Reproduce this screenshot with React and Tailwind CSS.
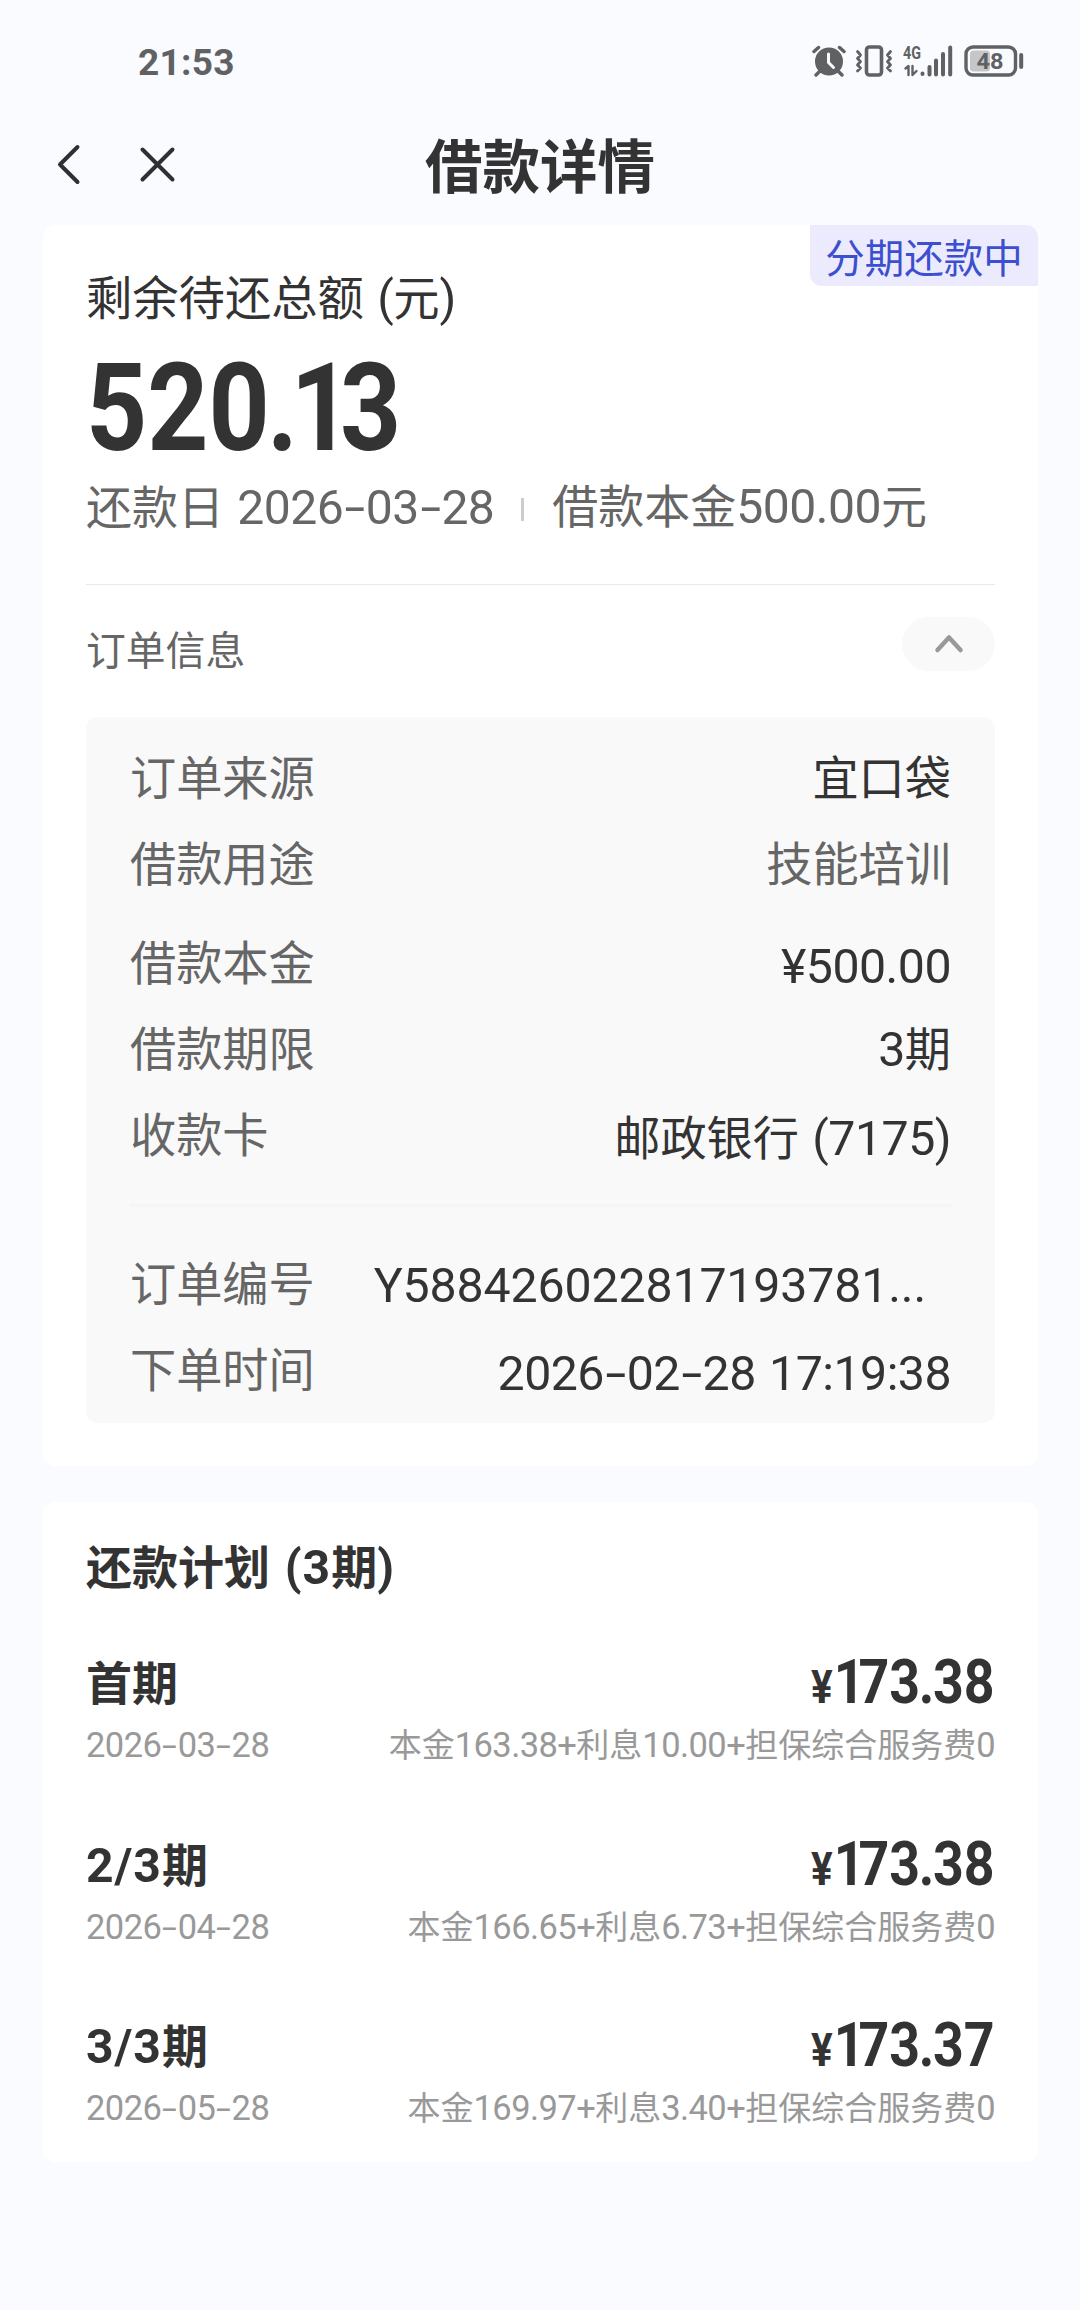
import React, { useState } from 'react';

const orderRows = [
  { label: '订单来源', value: '宜口袋' },
  { label: '借款用途', value: '技能培训', muted: true },
  { label: '借款本金', value: '¥500.00', gap: true, low: true },
  { label: '借款期限', value: '3期' },
  { label: '收款卡', value: '邮政银行 (7175)', low: true },
];

const orderMeta = [
  { label: '订单编号', value: 'Y588426022817193781...', indent: true },
  { label: '下单时间', value: '2026-02-28 17:19:38', low: true },
];

const plans = [
  { name: '首期', date: '2026-03-28', amount: '173.38', detail: '本金163.38+利息10.00+担保综合服务费0' },
  { name: '2/3期', date: '2026-04-28', amount: '173.38', detail: '本金166.65+利息6.73+担保综合服务费0' },
  { name: '3/3期', date: '2026-05-28', amount: '173.37', detail: '本金169.97+利息3.40+担保综合服务费0' },
];

// Latin runs get Roboto, slightly larger than the Chinese around them
function Mixed({ children, tracking = 'tracking-[-0.011em]' }) {
  return children.split(/([\x20-\x7e¥]+)/).filter(Boolean).map((part, i) => {
    if (!/^[\x20-\x7e¥]/.test(part)) return <React.Fragment key={i}>{part}</React.Fragment>;
    return (
      <span key={i} className={`font-[Roboto] text-[1.045em] leading-none [word-spacing:0.04em] whitespace-pre ${tracking}`}>
        {part.split(/(-)/).map((s, j) =>
          s === '-' ? (
            <span key={j} className="inline-block w-[0.47em] scale-x-[1.55] text-center">-</span>
          ) : s
        )}
      </span>
    );
  });
}

// Condensed money figures, with the dot and the "1" kerned tight
function Amount({ children }) {
  return children.split('').map((c, i, all) => {
    let kern = '';
    if (c === '1') kern = 'tracking-[-0.11em]';
    else if (c === '.' && all[i + 1] === '1') kern = 'tracking-[-0.07em]';
    else if (c === '.' || all[i + 1] === '.') kern = 'tracking-[-0.025em]';
    return <span key={i} className={kern}>{c}</span>;
  });
}

function StatusBar() {
  return (
    <div className="flex h-[120px] items-start justify-between pt-[44px] pr-[56px] pl-[138px] text-[#606163]">
      <span className="pt-px font-[Roboto] text-[37px] leading-[36px] font-bold tracking-[0.3px]">21:53</span>
      <div className="flex items-start">
        {/* alarm */}
        <svg width="34" height="34" viewBox="0 0 34 34" className="mr-[9px] -translate-x-px">
          <circle cx="17" cy="17.5" r="14" fill="currentColor" />
          <path d="M2 7.5l4.5-4M32 7.5l-4.5-4M8 27l-4 4M26 27l4 4" stroke="currentColor" strokeWidth="3.4" strokeLinecap="round" />
          <path d="M16.500 10v8.500l5 5" fill="none" stroke="#fafbff" strokeWidth="3" strokeLinecap="round" strokeLinejoin="round" />
        </svg>
        {/* vibrate */}
        <svg width="38" height="34" viewBox="0 0 38 34" className="mr-[9px] -translate-x-px" fill="none" stroke="currentColor" strokeLinecap="round" strokeLinejoin="round">
          <rect x="11.500" y="3" width="15" height="28" rx="3" strokeWidth="3.600" />
          <path d="M2.500 7.500l3 3.500-3 3.500 3 3-3 3.500 3 3-3 3M35.500 7.500l-3 3.500 3 3.500-3 3 3 3.500-3 3 3 3" strokeWidth="2.800" />
        </svg>
        {/* 4G signal */}
        <svg width="50" height="42" viewBox="0 -8 50 42" className="-mt-[8px] mr-[11px]">
          <text x="0" y="15" fontFamily="Roboto" fontWeight="700" fontSize="19" textLength="18" lengthAdjust="spacingAndGlyphs" fill="currentColor">4G</text>
          <g stroke="currentColor" strokeLinecap="round" fill="none">
            <path d="M2.500 24.500l3-2.500v9M9.500 22v9l4-4" strokeWidth="2.400" strokeLinejoin="round" />
            <path d="M19.500 29.500v0.500M26.500 23v7.500M33 16.500v14M40 10v20.500M47.200 3.500v27" strokeWidth="4" />
          </g>
        </svg>
        {/* battery */}
        <svg width="60" height="34" viewBox="0 0 60 34">
          <rect x="2" y="3" width="49.500" height="28" rx="7" fill="none" stroke="currentColor" strokeWidth="3.400" />
          <rect x="6" y="6.500" width="20" height="21" rx="3.500" fill="#c5c6c8" />
          <path d="M57.200 11v12" stroke="currentColor" strokeWidth="4" strokeLinecap="round" />
          <text x="26" y="25" textAnchor="middle" fontFamily="Roboto" fontWeight="700" fontSize="22.500" textLength="27" lengthAdjust="spacingAndGlyphs" fill="currentColor">48</text>
        </svg>
      </div>
    </div>
  );
}

function Header() {
  return (
    <header className="relative flex h-[105px] items-start pt-[24px] pl-[55px] text-[#2f3033]">
      <svg width="26" height="42" viewBox="0 0 26 42" fill="none" stroke="currentColor" strokeWidth="4" strokeLinecap="round" strokeLinejoin="round">
        <path d="M22.500 3L5 20.500l17.500 17.500" />
      </svg>
      <svg width="40" height="42" viewBox="0 0 40 42" className="ml-[57px]" fill="none" stroke="currentColor" strokeWidth="4" strokeLinecap="round">
        <path d="M4.500 5.500l30 30M34.500 5.500l-30 30" />
      </svg>
      <h1 className="absolute inset-x-0 top-[11px] text-center text-[57.500px] leading-[64px] font-bold text-[#333]">借款详情</h1>
    </header>
  );
}

function Row({ label, value, muted, gap, indent, low }) {
  return (
    <div className={`flex h-[86px] items-center justify-between ${gap ? 'mt-[13px]' : ''}`}>
      <span className="text-[#666]">{label}</span>
      <span className={`${muted ? 'text-[#666]' : 'text-[#333]'} ${indent ? 'pt-[2px] pr-[25px]' : ''} ${low ? 'pt-[5px]' : ''}`}>
        <Mixed tracking={indent ? 'tracking-[-0.003em]' : undefined}>{value}</Mixed>
      </span>
    </div>
  );
}

function Plan({ name, date, amount, detail }) {
  return (
    <div className="mb-[54.700px] last:mb-0">
      <div className="flex h-[67px] items-center justify-between text-[#333]">
        <span className="text-[46px] leading-[67px] font-bold"><Mixed tracking="tracking-[0.02em]">{name}</Mixed></span>
        <span className="flex origin-right scale-x-[0.88] items-baseline pt-[9px] font-[Roboto] font-bold">
          <span className="mr-px text-[46px] leading-[67px]">¥</span>
          <span className="text-[61px] leading-[67px]"><Amount>{amount}</Amount></span>
        </span>
      </div>
      <div className="flex h-[60px] items-center justify-between pb-px text-[33px] leading-[57px] text-[#999]">
        <span><Mixed tracking="tracking-[-0.015em]">{date}</Mixed></span>
        <span><Mixed tracking="tracking-[-0.016em]">{detail}</Mixed></span>
      </div>
    </div>
  );
}

export default function App() {
  const [open, setOpen] = useState(true);

  return (
    <div className="min-h-[2310px] w-[1080px] overflow-hidden bg-[#fafbff] font-['Noto_Sans_CJK_SC',sans-serif]">
      <StatusBar />
      <Header />

      <main className="flex flex-col gap-[36px] pr-[42px] pl-[43px]">
        <section className="relative h-[1241px] rounded-[12px] bg-white px-[43px] pt-[40px]">
          <div className="absolute top-0 right-0 h-[61px] w-[228px] rounded-tr-[12px] rounded-bl-[12px] bg-[#ebebfd] text-center text-[39.500px] leading-[61px] text-[#3c4fd0]">
            分期还款中
          </div>

          <div className="text-[46.300px] leading-[60px] text-[#333]"><Mixed>剩余待还总额 (元)</Mixed></div>
          <div className="h-[152px] origin-left scale-x-[0.875] pt-[13px] font-[Roboto] text-[122px] leading-[142px] font-bold text-[#333]">
            <Amount>520.13</Amount>
          </div>
          <div className="-mt-[4px] flex h-[60px] items-center text-[46px] leading-[60px] text-[#666]">
            <span className="pt-px"><Mixed>还款日 2026-03-28</Mixed></span>
            <span className="mt-[13px] mr-[28px] ml-[27px] h-[23px] w-[3px] bg-[#ccc]" />
            <span className="-mt-px"><Mixed>借款本金500.00元</Mixed></span>
          </div>

          <div className="mt-[51px] h-px bg-[#e9e9e9]" />

          <div className="mt-[32px] flex h-[54px] items-center justify-between">
            <span className="pt-[7px] text-[39.800px] leading-[54px] text-[#666]">订单信息</span>
            <button onClick={() => setOpen(!open)} className="flex h-[54px] w-[93px] items-center justify-center rounded-full bg-[#f9f9f9]">
              <svg width="32" height="22" viewBox="0 0 32 22" fill="none" stroke="#999" strokeWidth="4.500" strokeLinecap="round" strokeLinejoin="round" className={open ? '' : 'rotate-180'}>
                <path d="M4.500 17L16 4.500 27.500 17" />
              </svg>
            </button>
          </div>

          {open && (
            <div className="mt-[46px] h-[706px] rounded-[12px] bg-[#f9f9f9] pt-[15px] pr-[44px] pl-[44px] text-[46.200px] leading-[86px]">
              {orderRows.map(row => <Row key={row.label} {...row} />)}
              <div className="-mr-[2px] mt-[29px] mb-[31px] h-[3px] bg-[#f5f5f5]" />
              {orderMeta.map(row => <Row key={row.label} {...row} />)}
            </div>
          )}
        </section>

        <section className="h-[660px] rounded-[12px] bg-white px-[43px] pt-[29px]">
          <h2 className="mb-[50px] text-[46px] leading-[66px] font-bold text-[#333]"><Mixed tracking="tracking-[0.02em]">还款计划 (3期)</Mixed></h2>
          {plans.map(plan => <Plan key={plan.name} {...plan} />)}
        </section>
      </main>
    </div>
  );
}
